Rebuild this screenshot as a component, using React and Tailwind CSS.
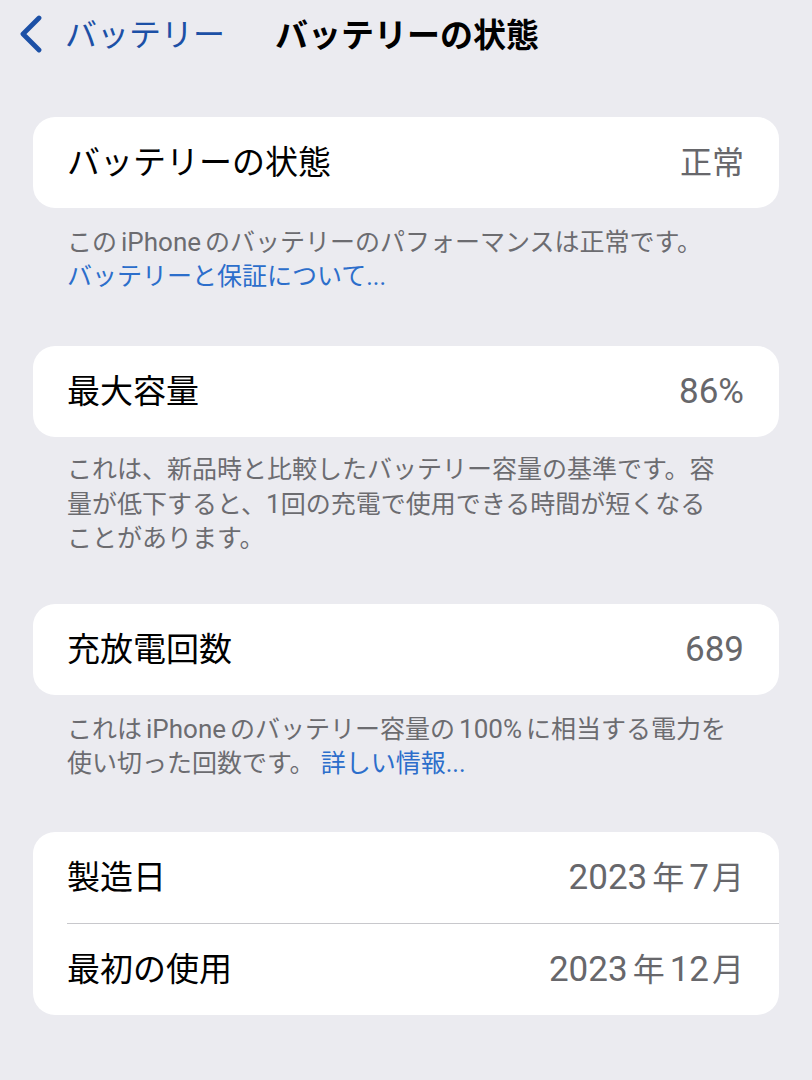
import React from "react";

const FONT = { fontFamily: 'Roboto, "Noto Sans CJK JP", "Noto Sans", sans-serif' };

function Val({ text }) {
  const parts = text.split(/([年月])/).filter(Boolean);
  return (
    <span className="text-[35px] leading-none text-[#67676b]">
      {parts.map((p, i) =>
        p === "年" || p === "月" ? (
          <span key={i} className={p === "年" ? "mx-[5px] text-[32px]" : "ml-[3px] text-[32px]"}>
            {p}
          </span>
        ) : (
          <span key={i}>{p}</span>
        )
      )}
    </span>
  );
}

function Row({ label, value }) {
  return (
    <div className="flex h-[91px] items-center justify-between pl-[34px] pr-[35px]">
      <span className="text-[33px] leading-none text-black">{label}</span>
      <Val text={value} />
    </div>
  );
}

function Card({ children }) {
  return <div className="rounded-[22px] bg-white overflow-hidden">{children}</div>;
}

function Footer({ children, className = "" }) {
  return (
    <div className={"px-[34px] text-[25px] leading-[34px] text-[#6c6c70] whitespace-nowrap " + className}>
      {children}
    </div>
  );
}

function L({ children }) {
  return <span className="mx-[4px] text-[26px]">{children}</span>;
}

export default function App() {
  return (
    <div className="min-h-[1080px] w-full bg-[#ebebf0]" style={FONT}>
      <div className="flex h-[70px] items-center">
        <svg width="28" height="40" viewBox="0 0 28 40" className="ml-[17px]">
          <polyline
            points="22,3 6,19 22,35"
            fill="none"
            stroke="#1c50a6"
            strokeWidth="4.8"
            strokeLinecap="round"
            strokeLinejoin="round"
          />
        </svg>
        <span className="ml-[20px] text-[32px] leading-none text-[#1c50a6]">バッテリー</span>
        <span className="ml-[50px] text-[33px] font-bold leading-none text-black">バッテリーの状態</span>
      </div>

      <div className="px-[33px] pt-[47px]">
        <Card>
          <div className="flex h-[91px] items-center justify-between pl-[34px] pr-[35px]">
            <span className="text-[33px] leading-none text-black">バッテリーの状態</span>
            <span className="text-[32px] leading-none text-[#67676b]">正常</span>
          </div>
        </Card>
        <Footer className="mt-[17px]">
          この<L>iPhone</L>のバッテリーのパフォーマンスは正常です。
          <br />
          <span className="text-[#2c6ecb]">バッテリーと保証について...</span>
        </Footer>

        <div className="mt-[52px]">
          <Card>
            <Row label="最大容量" value="86%" />
          </Card>
        </div>
        <Footer className="mt-[16px]">
          これは、新品時と比較したバッテリー容量の基準です。容
          <br />
          量が低下すると、<span className="text-[26px]">1</span>回の充電で使用できる時間が短くなる
          <br />
          ことがあります。
        </Footer>

        <div className="mt-[48px]">
          <Card>
            <Row label="充放電回数" value="689" />
          </Card>
        </div>
        <Footer className="mt-[17px]">
          これは<L>iPhone</L>のバッテリー容量の<L>100%</L>に相当する電力を
          <br />
          使い切った回数です。 <span className="text-[#2c6ecb]">詳しい情報...</span>
        </Footer>

        <div className="mt-[51px]">
          <Card>
            <Row label="製造日" value="2023年7月" />
            <div className="ml-[34px] h-px bg-[#c8c8cc]" />
            <Row label="最初の使用" value="2023年12月" />
          </Card>
        </div>
      </div>
    </div>
  );
}
